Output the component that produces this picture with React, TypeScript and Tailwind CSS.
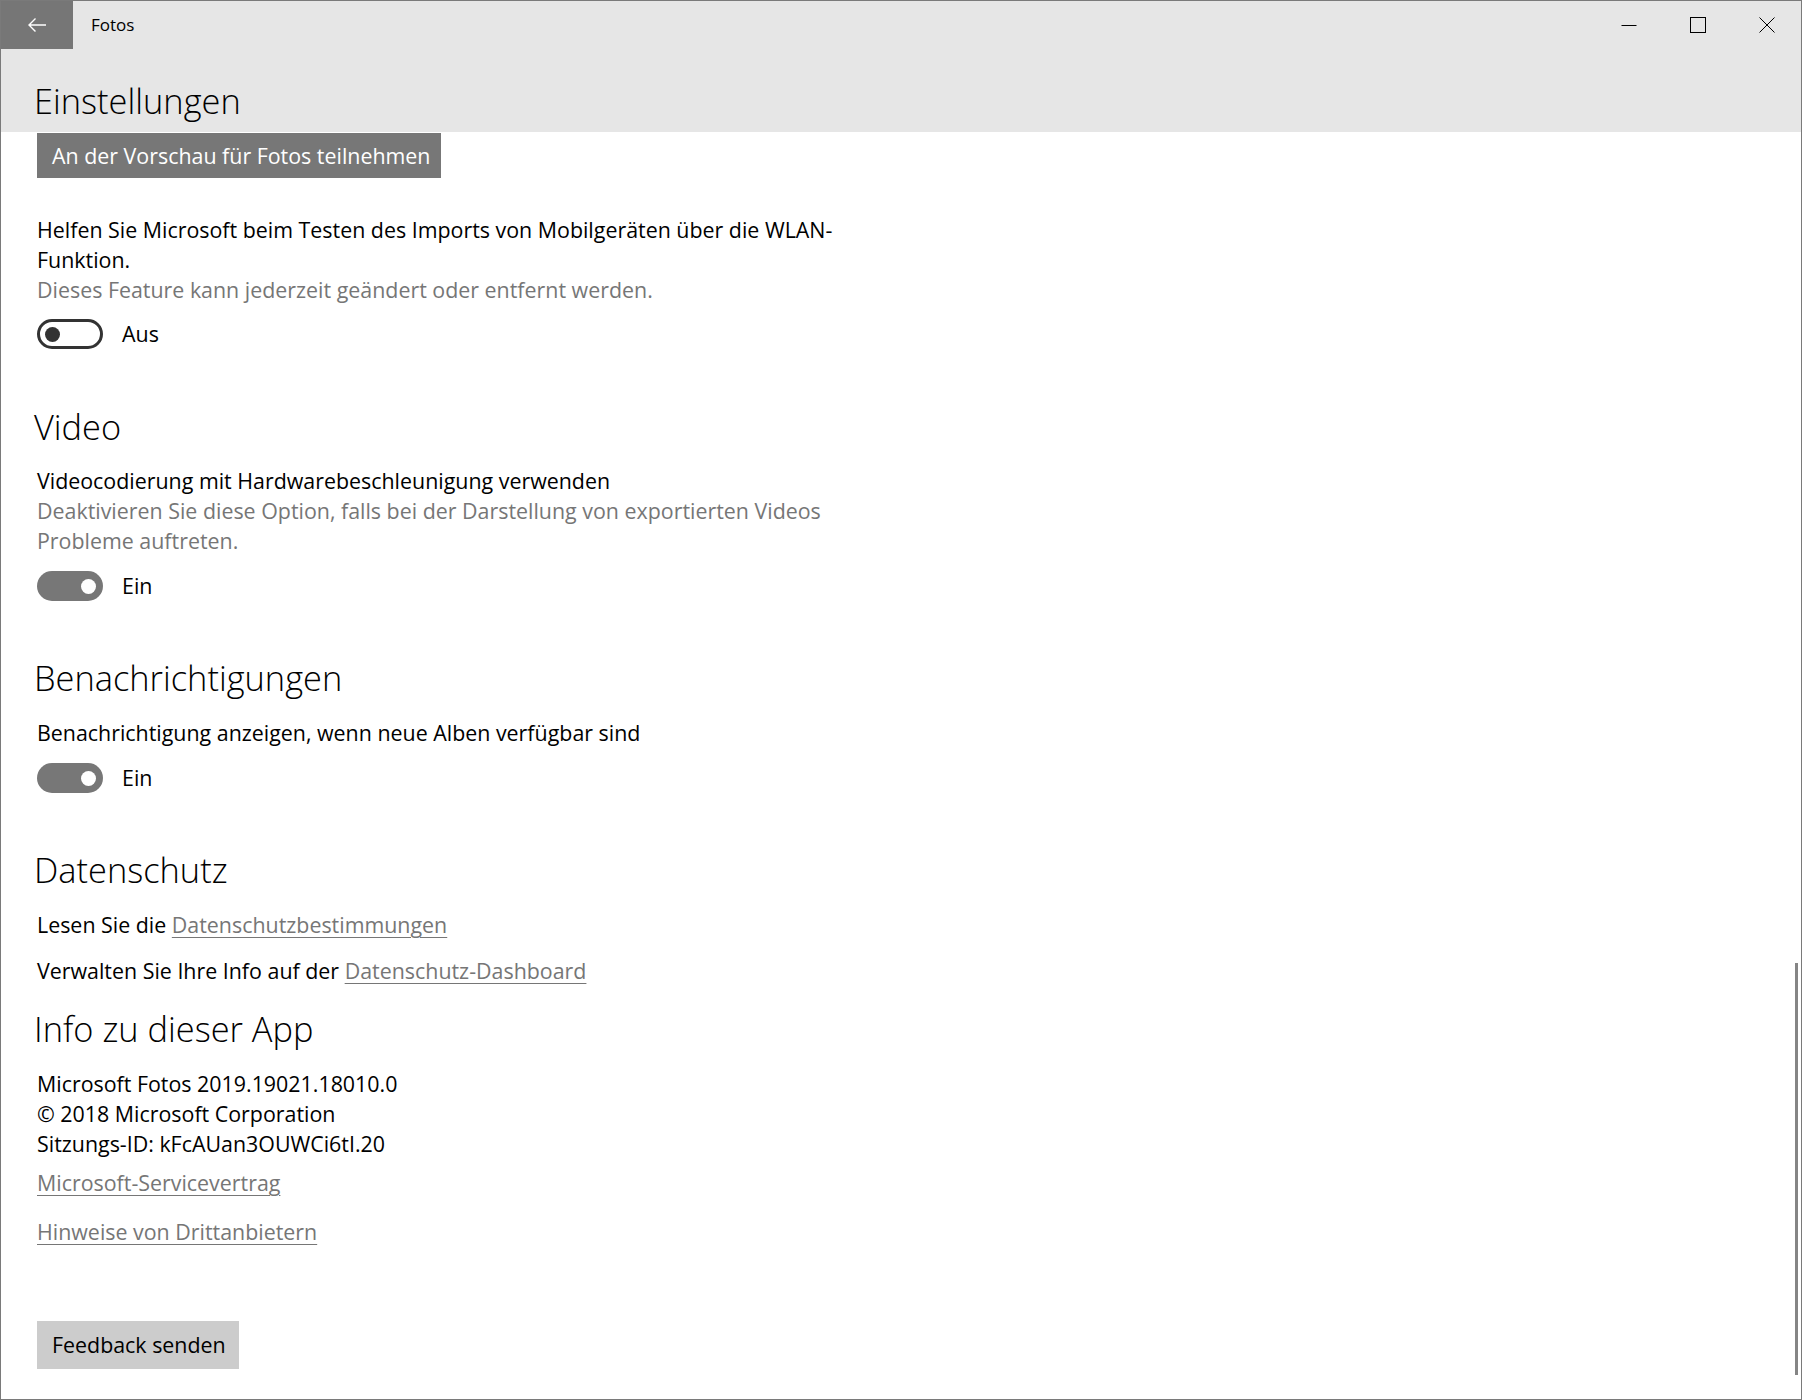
import React from "react";

function Toggle({ on }: { on: boolean }) {
  if (on) {
    return (
      <div className="w-[66px] h-[30px] rounded-full bg-[#777777] flex items-center justify-end pr-[7px]">
        <div className="w-[15px] h-[15px] rounded-full bg-white" />
      </div>
    );
  }
  return (
    <div className="w-[66px] h-[30px] rounded-full border-[3px] border-[#333333] flex items-center pl-[5px]">
      <div className="w-[15px] h-[15px] rounded-full bg-[#333333]" />
    </div>
  );
}

function ToggleRow({ on, className }: { on: boolean; className: string }) {
  return (
    <div className={"flex items-center h-[30px] " + className}>
      <Toggle on={on} />
      <span className="ml-[19px] text-[21.4px] leading-[30px] text-black">{on ? "Ein" : "Aus"}</span>
    </div>
  );
}

function Heading({ children, className }: { children: React.ReactNode; className: string }) {
  return (
    <div className={"h-[48px] text-[34.4px] leading-[48px] font-light text-black -ml-[3px] whitespace-nowrap " + className}>
      {children}
    </div>
  );
}

export default function App() {
  return (
    <div
      className="w-[1802px] h-[1400px] border border-[#7a7a7a] bg-white flex flex-col overflow-hidden text-black"
      style={{ fontFamily: '"Open Sans", "Noto Sans", "Liberation Sans", sans-serif' }}
    >
      {/* Title bar */}
      <div className="h-[48px] bg-[#e6e6e6] flex items-stretch shrink-0">
        <div className="w-[72px] bg-[#767676] flex items-center justify-center">
          <svg width="20" height="16" viewBox="0 0 20 16" fill="none">
            <path d="M19 8H2M8.5 1.5L2 8l6.5 6.5" stroke="#ffffff" strokeWidth="1.4" />
          </svg>
        </div>
        <div className="pl-[18px] flex items-center text-[17px] text-black">Fotos</div>
        <div className="flex-1" />
        <div className="w-[69px] flex items-center justify-center">
          <svg width="16" height="16" viewBox="0 0 16 16" fill="none">
            <path d="M0.5 8.5H15.5" stroke="#000000" strokeWidth="1" />
          </svg>
        </div>
        <div className="w-[69px] flex items-center justify-center">
          <svg width="16" height="16" viewBox="0 0 16 16" fill="none">
            <rect x="0.5" y="0.5" width="15" height="15" stroke="#000000" strokeWidth="1" />
          </svg>
        </div>
        <div className="w-[69px] flex items-center justify-center">
          <svg width="16" height="16" viewBox="0 0 16 16" fill="none">
            <path d="M0.5 0.5L15.5 15.5M15.5 0.5L0.5 15.5" stroke="#000000" strokeWidth="1" />
          </svg>
        </div>
      </div>

      {/* Header */}
      <div className="h-[83px] bg-[#e6e6e6] pl-[36px] pt-[28px] shrink-0">
        <Heading className="">Einstellungen</Heading>
      </div>

      {/* Content */}
      <div className="flex-1 relative overflow-hidden">
        <div className="pl-[36px] flex flex-col text-[21.4px] leading-[30px]">
          <div className="mt-[1px] w-[404px] h-[45px] bg-[#777777] text-white flex items-center pl-[15px] whitespace-nowrap">
            An der Vorschau für Fotos teilnehmen
          </div>

          <div className="mt-[37px] whitespace-nowrap">
            Helfen Sie Microsoft beim Testen des Imports von Mobilgeräten über die WLAN-
            <br />
            Funktion.
          </div>
          <div className="text-[#767676] whitespace-nowrap">Dieses Feature kann jederzeit geändert oder entfernt werden.</div>
          <ToggleRow on={false} className="mt-[14px]" />

          <Heading className="mt-[54px]">Video</Heading>
          <div className="mt-[15px] whitespace-nowrap">Videocodierung mit Hardwarebeschleunigung verwenden</div>
          <div className="text-[#767676] whitespace-nowrap">
            Deaktivieren Sie diese Option, falls bei der Darstellung von exportierten Videos
            <br />
            Probleme auftreten.
          </div>
          <ToggleRow on={true} className="mt-[15px]" />

          <Heading className="mt-[53px]">Benachrichtigungen</Heading>
          <div className="mt-[16px] whitespace-nowrap">Benachrichtigung anzeigen, wenn neue Alben verfügbar sind</div>
          <ToggleRow on={true} className="mt-[15px]" />

          <Heading className="mt-[53px]">Datenschutz</Heading>
          <div className="mt-[16px] whitespace-nowrap">
            Lesen Sie die{" "}
            <span className="text-[#767676] underline underline-offset-[4px] decoration-1">Datenschutzbestimmungen</span>
          </div>
          <div className="mt-[16px] whitespace-nowrap">
            Verwalten Sie Ihre Info auf der{" "}
            <span className="text-[#767676] underline underline-offset-[4px] decoration-1">Datenschutz-Dashboard</span>
          </div>

          <Heading className="mt-[19px]">Info zu dieser App</Heading>
          <div className="mt-[16px] whitespace-nowrap">Microsoft Fotos 2019.19021.18010.0</div>
          <div className="whitespace-nowrap">© 2018 Microsoft Corporation</div>
          <div className="whitespace-nowrap">Sitzungs-ID: kFcAUan3OUWCi6tI.20</div>
          <div className="mt-[9px] whitespace-nowrap">
            <span className="text-[#767676] underline underline-offset-[4px] decoration-1">Microsoft-Servicevertrag</span>
          </div>
          <div className="mt-[19px] whitespace-nowrap">
            <span className="text-[#767676] underline underline-offset-[4px] decoration-1">Hinweise von Drittanbietern</span>
          </div>

          <div className="mt-[74px] w-[202px] h-[48px] bg-[#cccccc] text-black flex items-center pl-[15px] whitespace-nowrap">
            Feedback senden
          </div>
        </div>

        {/* scrollbar */}
        <div className="absolute right-[3px] top-[831px] w-[3px] h-[412px] bg-[#858585]" />
      </div>
    </div>
  );
}
